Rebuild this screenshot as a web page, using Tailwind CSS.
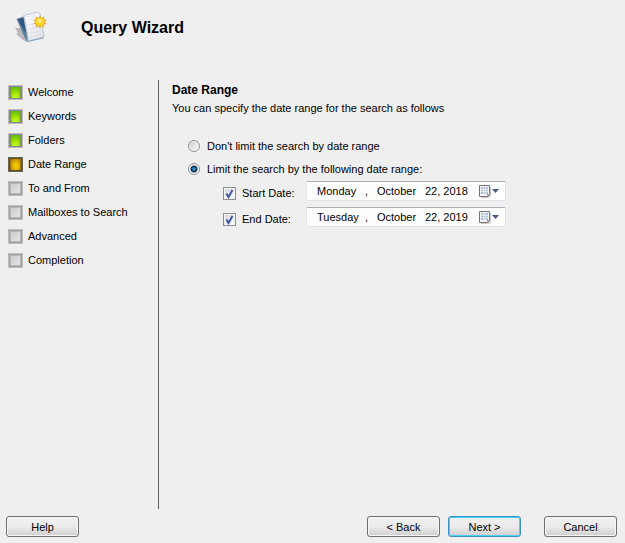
<!DOCTYPE html>
<html lang="en" class="h-full">
<head>
  <meta charset="UTF-8" />
  <meta name="viewport" content="width=device-width,initial-scale=1" />
  <title>Query Wizard</title>
  <script src="https://cdn.jsdelivr.net/npm/@tailwindcss/browser@4"></script>
</head>
<body class="min-h-screen flex flex-col bg-[#efefef] text-black text-[11px] leading-4 font-['Liberation_Sans',Arial,sans-serif]">

<!-- Shared gradients and icons -->
<svg class="absolute w-0 h-0" aria-hidden="true">
  <defs>
    <radialGradient id="green" cx="50%" cy="95%" r="95%">
      <stop offset="0" stop-color="#d0fa3c" /><stop offset=".45" stop-color="#9ee600" /><stop offset="1" stop-color="#69b80c" />
    </radialGradient>
    <radialGradient id="amber" cx="55%" cy="60%" r="70%">
      <stop offset="0" stop-color="#f6d400" /><stop offset=".5" stop-color="#e2b400" /><stop offset="1" stop-color="#b08206" />
    </radialGradient>
    <linearGradient id="grey" x2="1" y2="1">
      <stop offset="0" stop-color="#cdcdcd" /><stop offset="1" stop-color="#e4e4e4" />
    </linearGradient>
    <linearGradient id="paper" x2="1" y2="1">
      <stop offset="0" stop-color="#fff" /><stop offset="1" stop-color="#dde0e8" />
    </linearGradient>
    <symbol id="done" viewBox="0 0 15 15">
      <rect width="15" height="15" fill="#bcbcbc" />
      <rect x="1" y="1" width="13" height="13" fill="#8a8a8a" />
      <rect x="2" y="2" width="11" height="11" fill="#7d9450" />
      <path d="M3 2h9v10l-1 1H4l-1-1z" fill="url(#green)" />
    </symbol>
    <symbol id="current" viewBox="0 0 15 15">
      <rect width="15" height="15" fill="#6b6455" />
      <rect x="1" y="1" width="13" height="13" fill="#66501a" />
      <rect x="2" y="2" width="11" height="11" fill="#9a740c" />
      <path d="M3 2h9v10l-1 1H4l-1-1z" fill="url(#amber)" />
    </symbol>
    <symbol id="todo" viewBox="0 0 15 15">
      <rect width="15" height="15" fill="#bebebe" />
      <rect x="1" y="1" width="13" height="13" fill="#a0a0a0" />
      <rect x="2" y="2" width="11" height="11" fill="#b8b8b8" />
      <path d="M3 3h9v8l-1 1H3z" fill="url(#grey)" />
    </symbol>
    <symbol id="calendar" viewBox="0 0 21 13">
      <path d="M2 2h10v9l-2 2H2z" fill="#cbc8c8" />
      <path d="M.5.5h10v9l-2 2h-8z" fill="#f4f8fc" stroke="#7a7070" />
      <path d="M2 2h7v7H2z" fill="#b4c0d2" />
      <path d="M2 4.500h7M2 6.500h7M4.500 2v7M6.500 2v7" stroke="#edf2f8" stroke-width=".7" />
      <path d="M8 11V9h2z" fill="#8c8484" />
      <path d="M13 4h7l-3.500 4z" fill="#45598c" />
    </symbol>
  </defs>
</svg>

<header class="flex items-center gap-[33px] h-14 pl-3">
  <svg class="w-9 h-9 shrink-0" viewBox="0 0 36 36" aria-hidden="true">
    <path d="M3 18l6 0 7 11-1 3-4-2-7-6 2-1z" fill="#b9b9b9" />
    <path d="M4.500 9l7-2.500 5 24-2 1z" fill="#5b7fa5" />
    <path d="M6 9.500l5.500-2 4 19z" fill="#2f557f" />
    <path d="M14 30l2 2 15-3.500 1-2z" fill="#7f9bb8" />
    <path d="M11.500 5.500L25 2l3 1.500L32 27l-16 4z" fill="url(#paper)" stroke="#a9b4c2" stroke-width=".7" />
    <path d="M12.500 6.500L16.500 30" stroke="#9aa8b8" stroke-width="1" stroke-dasharray="1 1" />
    <path d="M15 7l8-2M16 10l6-1.500M16 15l11-2M17 19l12-2.500M18 23l11-2.500M18 27l12-3" stroke="#d3d7df" stroke-width=".6" />
    <path d="M28 5l1.400 3 3-1.600-.8 3.200 3.400.4-2.800 2 2.800 2-3.400.4.8 3.200-3-1.600L28 19l-1.400-3-3 1.600.8-3.200-3.400-.4 2.800-2-2.800-2 3.400-.4-.8-3.200 3 1.600z" fill="#e9a623" />
    <circle cx="28" cy="12" r="4.200" fill="#ffd51f" />
    <circle cx="27.500" cy="11" r="2" fill="#ffef82" />
  </svg>
  <h1 class="text-base font-bold leading-5">Query Wizard</h1>
</header>

<main class="flex flex-1 mt-6">
  <nav class="w-[158px] shrink-0 pt-1 pl-2" aria-label="Wizard steps">
    <ol class="flex flex-col gap-2">
      <li class="flex items-center gap-[5px]"><svg class="w-[15px] h-[15px] mt-px"><use href="#done" /></svg>Welcome</li>
      <li class="flex items-center gap-[5px]"><svg class="w-[15px] h-[15px] mt-px"><use href="#done" /></svg>Keywords</li>
      <li class="flex items-center gap-[5px]"><svg class="w-[15px] h-[15px] mt-px"><use href="#done" /></svg>Folders</li>
      <li class="flex items-center gap-[5px]" aria-current="step"><svg class="w-[15px] h-[15px] mt-px"><use href="#current" /></svg>Date Range</li>
      <li class="flex items-center gap-[5px]"><svg class="w-[15px] h-[15px] mt-px"><use href="#todo" /></svg>To and From</li>
      <li class="flex items-center gap-[5px]"><svg class="w-[15px] h-[15px] mt-px"><use href="#todo" /></svg>Mailboxes to Search</li>
      <li class="flex items-center gap-[5px]"><svg class="w-[15px] h-[15px] mt-px"><use href="#todo" /></svg>Advanced</li>
      <li class="flex items-center gap-[5px]"><svg class="w-[15px] h-[15px] mt-px"><use href="#todo" /></svg>Completion</li>
    </ol>
  </nav>

  <section class="flex-1 border-l border-[#606060] pt-[2px] pl-[13px]">
    <h2 class="text-xs font-bold leading-4">Date Range</h2>
    <p class="mt-[2px]">You can specify the date range for the search as follows</p>

    <div class="flex flex-col gap-[7px] mt-[22px] pl-4">
      <label class="flex items-center gap-[7px]">
        <input type="radio" name="limit" class="appearance-none w-3 h-3 rounded-full border border-[#8e8f8f] bg-linear-to-br from-[#c4c8cc] to-white shadow-[inset_0_0_0_1px_#f4f4f4] checked:bg-[radial-gradient(circle_at_50%_50%,#6fd0f5_0px,#2383b8_1px,#0b2747_3px,#f4f4f4_4px)]" />
        Don't limit the search by date range
      </label>
      <label class="flex items-center gap-[7px]">
        <input type="radio" name="limit" checked class="appearance-none w-3 h-3 rounded-full border border-[#8e8f8f] bg-linear-to-br from-[#c4c8cc] to-white shadow-[inset_0_0_0_1px_#f4f4f4] checked:bg-[radial-gradient(circle_at_50%_50%,#6fd0f5_0px,#2383b8_1px,#0b2747_3px,#f4f4f4_4px)]" />
        Limit the search by the following date range:
      </label>
    </div>

    <div class="flex flex-col gap-[6px] mt-1 pl-[51px]">
      <div class="flex items-center">
        <label class="flex items-center gap-[6px] w-[83px] pt-1">
          <span class="grid">
            <input type="checkbox" checked class="peer appearance-none col-start-1 row-start-1 w-[13px] h-[13px] border border-[#8e8f8f] bg-linear-to-br from-[#d0d4da] to-white shadow-[inset_0_0_0_1px_#f4f4f4]" />
            <svg class="col-start-1 row-start-1 w-[13px] h-[13px] invisible peer-checked:visible pointer-events-none" viewBox="0 0 13 13"><path d="M3.500 6.500l2 3.500L9.500 3" fill="none" stroke="#4058a4" stroke-width="2" /></svg>
          </span>
          Start Date:
        </label>
        <div role="group" aria-label="Start date" class="flex items-center w-[200px] h-5 pl-[10px] pr-[5px] bg-white rounded-xs border border-[#e2e3ea] border-t-[#abadb3]">
          <input aria-label="Start weekday" value="Monday" class="w-12 outline-none" />
          <span class="w-3">,</span>
          <input aria-label="Start month" value="October" class="w-12 outline-none" />
          <input aria-label="Start day and year" value="22, 2018" class="w-[54px] outline-none" />
          <button type="button" aria-label="Choose start date"><svg class="w-[21px] h-[13px]"><use href="#calendar" /></svg></button>
        </div>
      </div>
      <div class="flex items-center">
        <label class="flex items-center gap-[6px] w-[83px] pt-1">
          <span class="grid">
            <input type="checkbox" checked class="peer appearance-none col-start-1 row-start-1 w-[13px] h-[13px] border border-[#8e8f8f] bg-linear-to-br from-[#d0d4da] to-white shadow-[inset_0_0_0_1px_#f4f4f4]" />
            <svg class="col-start-1 row-start-1 w-[13px] h-[13px] invisible peer-checked:visible pointer-events-none" viewBox="0 0 13 13"><path d="M3.500 6.500l2 3.500L9.500 3" fill="none" stroke="#4058a4" stroke-width="2" /></svg>
          </span>
          End Date:
        </label>
        <div role="group" aria-label="End date" class="flex items-center w-[200px] h-5 pl-[10px] pr-[5px] bg-white rounded-xs border border-[#e2e3ea] border-t-[#abadb3]">
          <input aria-label="End weekday" value="Tuesday" class="w-12 outline-none" />
          <span class="w-3">,</span>
          <input aria-label="End month" value="October" class="w-12 outline-none" />
          <input aria-label="End day and year" value="22, 2019" class="w-[54px] outline-none" />
          <button type="button" aria-label="Choose end date"><svg class="w-[21px] h-[13px]"><use href="#calendar" /></svg></button>
        </div>
      </div>
    </div>
  </section>
</main>

<footer class="flex items-center gap-2 pt-[7px] pb-[6px] pl-[6px] pr-2">
  <button type="button" class="w-[73px] h-[21px] mr-auto rounded-[3px] border border-[#707070] bg-linear-to-b from-[#f2f2f2] from-0% via-[#ebebeb] via-50% to-[#cfcfcf] shadow-[inset_0_0_0_1px_#f6f6f6]">Help</button>
  <button type="button" class="w-[73px] h-[21px] rounded-[3px] border border-[#707070] bg-linear-to-b from-[#f2f2f2] from-0% via-[#ebebeb] via-50% to-[#cfcfcf] shadow-[inset_0_0_0_1px_#f6f6f6]">&lt; Back</button>
  <button type="button" class="w-[73px] h-[21px] rounded-[3px] border border-[#3c8fc1] bg-linear-to-b from-[#f2f2f2] from-0% via-[#ebebeb] via-50% to-[#cfcfcf] shadow-[inset_0_0_0_1px_#48d0f8]">Next &gt;</button>
  <button type="button" class="w-[73px] h-[21px] ml-[15px] rounded-[3px] border border-[#707070] bg-linear-to-b from-[#f2f2f2] from-0% via-[#ebebeb] via-50% to-[#cfcfcf] shadow-[inset_0_0_0_1px_#f6f6f6]">Cancel</button>
</footer>

</body>
</html>
